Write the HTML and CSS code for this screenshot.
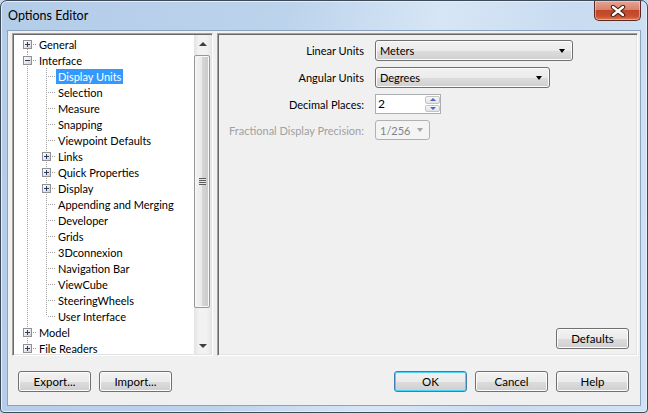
FILE: index.html
```html
<!DOCTYPE html>
<html lang="en">
<head>
    <meta charset="UTF-8">
    <title>Options Editor</title>
    <link rel="stylesheet" href="styles.css">
</head>
<body>
    <div class="window">
        <div class="titlebar">
            <span class="title">Options Editor</span>
            <button class="close">
                <svg width="16" height="12" viewBox="0 0 16 12">
                    <path d="M3 2 L13 10 M13 2 L3 10" stroke="#3d1a12" stroke-width="4.4" stroke-linecap="round"/>
                    <path d="M3 2 L13 10 M13 2 L3 10" stroke="#fff" stroke-width="2.4" stroke-linecap="round"/>
                </svg>
            </button>
        </div>

        <div class="client">
            <div class="panels">
                <div class="tree-box">
                    <ul class="tree">
                        <li class="row"><span class="cell start"><i class="exp"></i></span><span class="label">General</span></li>
                        <li class="row"><span class="cell tee"><i class="exp open"></i></span><span class="label">Interface</span></li>
                        <li class="row"><span class="cell pipe"></span><span class="cell tee"></span><span class="label selected">Display Units</span></li>
                        <li class="row"><span class="cell pipe"></span><span class="cell tee"></span><span class="label">Selection</span></li>
                        <li class="row"><span class="cell pipe"></span><span class="cell tee"></span><span class="label">Measure</span></li>
                        <li class="row"><span class="cell pipe"></span><span class="cell tee"></span><span class="label">Snapping</span></li>
                        <li class="row"><span class="cell pipe"></span><span class="cell tee"></span><span class="label">Viewpoint Defaults</span></li>
                        <li class="row"><span class="cell pipe"></span><span class="cell tee"><i class="exp"></i></span><span class="label">Links</span></li>
                        <li class="row"><span class="cell pipe"></span><span class="cell tee"><i class="exp"></i></span><span class="label">Quick Properties</span></li>
                        <li class="row"><span class="cell pipe"></span><span class="cell tee"><i class="exp"></i></span><span class="label">Display</span></li>
                        <li class="row"><span class="cell pipe"></span><span class="cell tee"></span><span class="label">Appending and Merging</span></li>
                        <li class="row"><span class="cell pipe"></span><span class="cell tee"></span><span class="label">Developer</span></li>
                        <li class="row"><span class="cell pipe"></span><span class="cell tee"></span><span class="label">Grids</span></li>
                        <li class="row"><span class="cell pipe"></span><span class="cell tee"></span><span class="label">3Dconnexion</span></li>
                        <li class="row"><span class="cell pipe"></span><span class="cell tee"></span><span class="label">Navigation Bar</span></li>
                        <li class="row"><span class="cell pipe"></span><span class="cell tee"></span><span class="label">ViewCube</span></li>
                        <li class="row"><span class="cell pipe"></span><span class="cell tee"></span><span class="label">SteeringWheels</span></li>
                        <li class="row"><span class="cell pipe"></span><span class="cell end"></span><span class="label">User Interface</span></li>
                        <li class="row"><span class="cell tee"><i class="exp"></i></span><span class="label">Model</span></li>
                        <li class="row"><span class="cell end"><i class="exp"></i></span><span class="label">File Readers</span></li>
                    </ul>
                    <div class="scrollbar">
                        <div class="sb-btn"><i class="sb-up"></i></div>
                        <div class="sb-thumb"><i class="grip"></i></div>
                        <div class="sb-track"></div>
                        <div class="sb-btn"><i class="sb-down"></i></div>
                    </div>
                </div>

                <div class="settings">
                    <div class="form">
                        <label>Linear Units</label>
                        <div class="combo wide-1">Meters<i class="arrow"></i></div>

                        <label>Angular Units</label>
                        <div class="combo wide-2">Degrees<i class="arrow"></i></div>

                        <label>Decimal Places:</label>
                        <div class="spin">
                            <div class="spin-text">2</div>
                            <div class="spin-btns">
                                <span class="spin-btn"><i class="spin-up"></i></span>
                                <span class="spin-btn"><i class="spin-down"></i></span>
                            </div>
                        </div>

                        <label class="disabled">Fractional Display Precision:</label>
                        <div class="combo small disabled">1/256<i class="arrow"></i></div>
                    </div>
                    <div class="settings-foot">
                        <button class="btn">Defaults</button>
                    </div>
                </div>
            </div>

            <div class="actions">
                <div class="group">
                    <button class="btn">Export...</button>
                    <button class="btn">Import...</button>
                </div>
                <div class="group">
                    <button class="btn default">OK</button>
                    <button class="btn">Cancel</button>
                    <button class="btn">Help</button>
                </div>
            </div>
        </div>
    </div>
</body>
</html>
```

FILE: styles.css
```css
* {
    margin: 0;
    padding: 0;
    box-sizing: border-box;
}

body {
    width: 648px;
    height: 413px;
    font-family: Lato, "Liberation Sans", sans-serif;
    font-size: 11px;
    color: #000;
    background: #c4d8ee;
    overflow: hidden;
}

.window {
    width: 648px;
    height: 413px;
    border: 1px solid #3f4a58;
    border-radius: 7px 7px 4px 4px;
    background: linear-gradient(100deg, #b3cce8 0%, #bcd3ec 40%, #d7e6f6 62%, #c8dbf0 80%, #d1e2f4 100%);
    padding: 0 6px 6px 6px;
    display: flex;
    flex-direction: column;
    box-shadow: inset 0 0 0 1px #e4eef9;
}

/* title bar */
.titlebar {
    height: 29px;
    display: flex;
    justify-content: space-between;
    align-items: flex-start;
}

.title {
    padding: 7px 0 0 1px;
    font-size: 12.5px;
    color: #000;
}

.close {
    width: 47px;
    height: 20px;
    border: 1px solid #5a2a22;
    border-top: none;
    border-radius: 0 0 5px 5px;
    background: linear-gradient(to bottom, #e8a493 0%, #d7836d 45%, #c0452a 50%, #c7502f 80%, #e07a54 100%);
    box-shadow: inset 0 0 0 1px rgba(255, 220, 210, 0.5);
    display: flex;
    align-items: center;
    justify-content: center;
}

/* client area */
.client {
    flex: 1;
    background: #f0f0f0;
    border: 1px solid #8da2bc;
    display: flex;
    flex-direction: column;
}

.panels {
    height: 323px;
    margin: 2px 2px 0 4px;
    display: flex;
    gap: 4px;
}

.tree-box,
.settings {
    border: 1px solid;
    border-color: #a0a0a0 #ffffff #ffffff #a0a0a0;
    box-shadow: inset 1px 1px 0 #696969, inset -1px -1px 0 #e3e3e3;
    padding: 1px;
}

.tree-box {
    width: 201px;
    display: flex;
}

/* tree */
.tree {
    flex: 1;
    list-style: none;
    background: #fff;
    padding: 1px 0 0 4px;
    overflow: hidden;
}

.row {
    height: 16px;
    display: flex;
    align-items: center;
    white-space: nowrap;
}

.cell {
    width: 19px;
    height: 16px;
    flex: none;
    display: flex;
    align-items: center;
    justify-content: center;
    background-repeat: no-repeat;
    --v: repeating-linear-gradient(to bottom, #a0a0a0 0 1px, transparent 1px 2px);
    --h: repeating-linear-gradient(to right, #a0a0a0 0 1px, transparent 1px 2px);
}

.cell.tee {
    background-image: var(--v), var(--h);
    background-position: 9px 0, 11px 8px;
    background-size: 1px 16px, 8px 1px;
}

.cell.start {
    background-image: var(--v), var(--h);
    background-position: 9px 9px, 11px 8px;
    background-size: 1px 7px, 8px 1px;
}

.cell.end {
    background-image: var(--v), var(--h);
    background-position: 9px 0, 11px 8px;
    background-size: 1px 8px, 8px 1px;
}

.cell.pipe {
    background-image: var(--v);
    background-position: 9px 0;
    background-size: 1px 16px;
}

.exp {
    width: 9px;
    height: 9px;
    border: 1px solid #919191;
    background:
        linear-gradient(#2c3e63, #2c3e63) center / 5px 1px no-repeat,
        linear-gradient(#2c3e63, #2c3e63) center / 1px 5px no-repeat,
        linear-gradient(to bottom right, #ffffff, #d4d4d4);
}

.exp.open {
    background:
        linear-gradient(#2c3e63, #2c3e63) center / 5px 1px no-repeat,
        linear-gradient(to bottom right, #ffffff, #d4d4d4);
}

.label {
    height: 15px;
    line-height: 15px;
    padding: 0 2px;
}

.label.selected {
    background: #3399ff;
    color: #fff;
}

/* scrollbar */
.scrollbar {
    width: 17px;
    display: flex;
    flex-direction: column;
    background: linear-gradient(to right, #e3e3e3, #f2f2f2 30%, #f2f2f2 70%, #e8e8e8);
}

.sb-btn {
    height: 17px;
    display: flex;
    align-items: center;
    justify-content: center;
}

.sb-up,
.sb-down {
    width: 0;
    height: 0;
    border-left: 4px solid transparent;
    border-right: 4px solid transparent;
}

.sb-up {
    border-bottom: 4px solid #3e3e3e;
}

.sb-down {
    border-top: 4px solid #3e3e3e;
}

.sb-thumb {
    height: 253px;
    margin: 3px 1px 0 0;
    border: 1px solid #979797;
    border-radius: 2px;
    background: linear-gradient(to right, #f3f3f3, #e9e9e9 50%, #d6d6d6 51%, #c9c9c9);
    box-shadow: inset 0 0 0 1px #f8f8f8;
    display: flex;
    align-items: center;
    justify-content: center;
}

.grip {
    width: 7px;
    height: 7px;
    background: repeating-linear-gradient(to bottom, #5b5b5b 0 1px, #e8e8e8 1px 2px);
}

.sb-track {
    flex: 1;
}

/* settings panel */
.settings {
    flex: 1;
    display: flex;
    flex-direction: column;
    justify-content: space-between;
    padding: 6px 8px 6px 1px;
}

.form {
    display: grid;
    grid-template-columns: 145px auto;
    column-gap: 11px;
    row-gap: 6px;
    justify-items: start;
    align-items: center;
}

.form label {
    justify-self: end;
    white-space: nowrap;
}

.form label.disabled {
    color: #a0a0a0;
}

.combo {
    height: 21px;
    border: 1px solid #707070;
    border-radius: 3px;
    background: linear-gradient(to bottom, #f2f2f2 0%, #ebebeb 50%, #dddddd 51%, #cfcfcf 100%);
    box-shadow: inset 0 0 0 1px #fcfcfc;
    padding: 0 4px;
    line-height: 19px;
    display: flex;
    justify-content: space-between;
    align-items: center;
}

.combo .arrow {
    width: 0;
    height: 0;
    border-left: 3.5px solid transparent;
    border-right: 3.5px solid transparent;
    border-top: 4px solid #000;
    margin-right: 3px;
}

.wide-1 {
    width: 198px;
}

.wide-2 {
    width: 175px;
}

.combo.small {
    width: 55px;
    height: 20px;
}

.combo.disabled {
    border-color: #adb2b5;
    background: #f4f4f4;
    box-shadow: none;
    color: #838383;
}

.combo.disabled .arrow {
    border-top-color: #a6a6a6;
    margin-right: 2px;
}

.spin {
    width: 66px;
    height: 20px;
    border: 1px solid #abadb3;
    background: #fff;
    display: flex;
}

.spin-text {
    flex: 1;
    padding-left: 2px;
    line-height: 17px;
    font-size: 12px;
}

.spin-btns {
    width: 15px;
    display: flex;
    flex-direction: column;
    gap: 1px;
    padding: 1px 0;
}

.spin-btn {
    flex: 1;
    border: 1px solid #c4c4c4;
    border-radius: 2px;
    background: linear-gradient(to bottom, #f7f7f7, #e3e3e3);
    display: flex;
    align-items: center;
    justify-content: center;
}

.spin-up,
.spin-down {
    width: 0;
    height: 0;
    border-left: 3px solid transparent;
    border-right: 3px solid transparent;
}

.spin-up {
    border-bottom: 3px solid #4a69b8;
}

.spin-down {
    border-top: 3px solid #4a69b8;
}

.settings-foot {
    display: flex;
    justify-content: flex-end;
}

/* buttons */
.btn {
    width: 73px;
    height: 21px;
    font-family: inherit;
    font-size: 11.5px;
    color: #000;
    border: 1px solid #707070;
    border-radius: 3px;
    background: linear-gradient(to bottom, #f2f2f2 0%, #ebebeb 50%, #dddddd 51%, #cfcfcf 100%);
    box-shadow: inset 0 0 0 1px #fcfcfc;
}

.btn.default {
    border-color: #3c7fb1;
    box-shadow: inset 0 0 0 1px #48d4fb;
}

.actions {
    display: flex;
    justify-content: space-between;
    padding: 15px 11px 0 10px;
}

.group {
    display: flex;
    gap: 8px;
}
```
